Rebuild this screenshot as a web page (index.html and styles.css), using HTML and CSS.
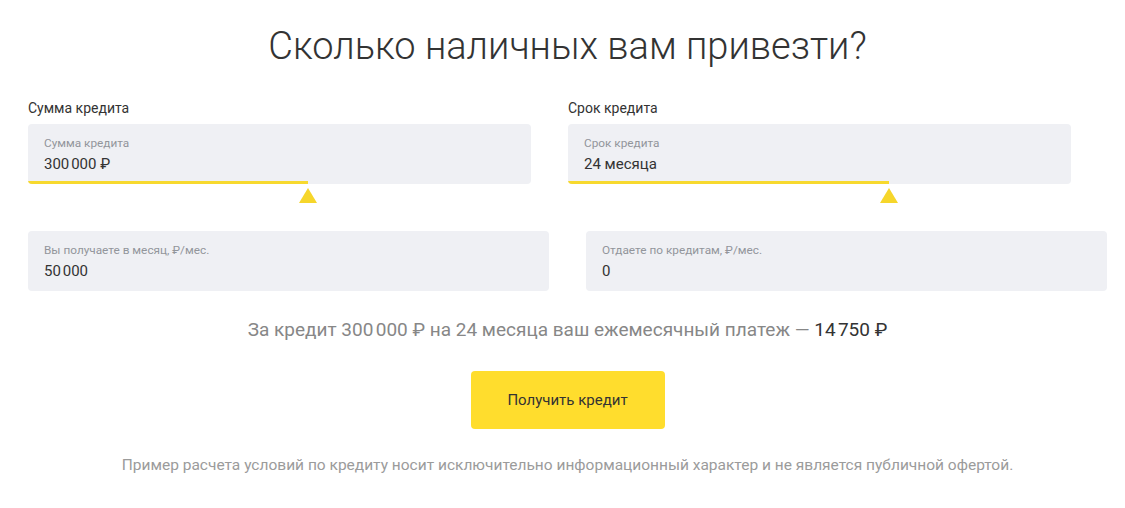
FILE: index.html
```html
<!DOCTYPE html>
<html lang="ru">
<head>
<meta charset="utf-8">
<link rel="stylesheet" href="styles.css">
</head>
<body>
<div class="page">
  <h1 class="title">Сколько наличных вам привезти?</h1>
  <div class="row row-top">
    <div class="group">
      <div class="group-label">Сумма кредита</div>
      <div class="field">
        <div class="field-label">Сумма кредита</div>
        <div class="field-value">300&#8239;000 ₽</div>
        <div class="track" style="width: 55.7%"></div>
      </div>
      <div class="thumb-row"><div class="thumb" style="margin-left: 271px"></div></div>
    </div>
    <div class="group">
      <div class="group-label">Срок кредита</div>
      <div class="field">
        <div class="field-label">Срок кредита</div>
        <div class="field-value">24 месяца</div>
        <div class="track" style="width: 63.8%"></div>
      </div>
      <div class="thumb-row"><div class="thumb" style="margin-left: 312px"></div></div>
    </div>
  </div>
  <div class="row row-bottom">
    <div class="field">
      <div class="field-label">Вы получаете в месяц, ₽/мес.</div>
      <div class="field-value">50&#8239;000</div>
    </div>
    <div class="field">
      <div class="field-label">Отдаете по кредитам, ₽/мес.</div>
      <div class="field-value">0</div>
    </div>
  </div>
  <p class="summary">За кредит 300&#8239;000 ₽ на 24 месяца ваш ежемесячный платеж — <span class="amount">14&#8239;750 ₽</span></p>
  <div class="actions"><button class="btn">Получить кредит</button></div>
  <p class="note">Пример расчета условий по кредиту носит исключительно информационный характер и не является публичной офертой.</p>
</div>
</body>
</html>
```
FILE: styles.css
```css
* { box-sizing: border-box; }
html, body { margin: 0; padding: 0; background: #fff; }
body { font-family: Roboto, "Liberation Sans", Arial, sans-serif; color: #333; }
.page { width: 1125px; padding: 0 18px 0 28px; }
.title {
  margin: 0;
  padding-top: 22px;
  height: 98px;
  text-align: center;
  font-weight: 300;
  font-size: 38px;
  line-height: 48px;
  color: #333;
}
.row { display: grid; column-gap: 37px; }
.row-top { grid-template-columns: 503px 503px; }
.row-bottom { grid-template-columns: 521px 521px; margin-top: 28px; }
.group-label { font-size: 14px; line-height: 20px; height: 26px; color: #333; }
.field {
  position: relative;
  height: 60px;
  background: #eff0f4;
  border-radius: 4px;
  padding: 12px 16px 0;
  overflow: hidden;
}
.field-label { font-size: 11.8px; line-height: 15px; color: #92959b; }
.field-value { font-size: 15px; line-height: 20px; color: #333; margin-top: 3px; }
.track {
  position: absolute;
  left: 0;
  bottom: 0;
  height: 3px;
  background: #f7d92e;
}
.thumb-row { height: 19px; padding-top: 4px; }
.thumb {
  width: 0; height: 0;
  border-left: 9px solid transparent;
  border-right: 9px solid transparent;
  border-bottom: 15px solid #f6d62b;
}
.summary {
  margin: 27px 0 0;
  text-align: center;
  font-size: 19px;
  line-height: 24px;
  color: #878787;
}
.amount { color: #333; }
.actions { display: flex; justify-content: center; margin-top: 29px; }
.btn {
  width: 194px;
  height: 58px;
  border: 0;
  border-radius: 4px;
  background: #ffdd2d;
  font-family: Roboto, "Liberation Sans", Arial, sans-serif;
  font-size: 15px;
  color: #333;
}
.note {
  margin: 27px 0 0;
  text-align: center;
  font-size: 15.5px;
  line-height: 18px;
  color: #9b9b9b;
}
```
